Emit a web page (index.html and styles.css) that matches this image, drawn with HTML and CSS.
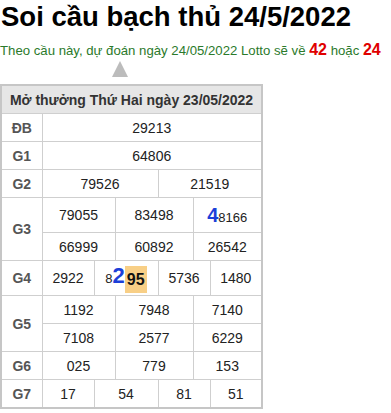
FILE: index.html
```html
<!DOCTYPE html>
<html lang="vi">
<head>
<meta charset="utf-8">
<title>Soi cầu bạch thủ 24/5/2022</title>
<link rel="stylesheet" href="styles.css">
</head>
<body>
<h1 class="title">Soi cầu bạch thủ 24/5/2022</h1>
<p class="predict">Theo cầu này, dự đoán ngày 24/05/2022 Lotto sẽ về <b class="hot">42</b> hoặc <b class="hot">24</b></p>
<div class="pointer"></div>
<table class="result">
  <colgroup>
    <col class="c-label"><col class="c1"><col class="c2"><col class="c3"><col class="c4"><col class="c5"><col class="c6">
  </colgroup>
  <thead>
    <tr><th colspan="7" class="head">Mở thưởng Thứ Hai ngày 23/05/2022</th></tr>
  </thead>
  <tbody>
    <tr><td class="lbl">ĐB</td><td colspan="6">29213</td></tr>
    <tr><td class="lbl">G1</td><td colspan="6">64806</td></tr>
    <tr><td class="lbl">G2</td><td colspan="3">79526</td><td colspan="3">21519</td></tr>
    <tr class="tall"><td class="lbl" rowspan="2">G3</td><td colspan="2">79055</td><td colspan="2">83498</td><td colspan="2"><b class="pick">4</b><span class="rest">8166</span></td></tr>
    <tr><td colspan="2">66999</td><td colspan="2">60892</td><td colspan="2">26542</td></tr>
    <tr class="tall"><td class="lbl">G4</td><td>2922</td><td colspan="2"><span class="rest">8</span><b class="pick pick-lg">2</b><b class="mark">95</b></td><td colspan="2">5736</td><td>1480</td></tr>
    <tr><td class="lbl" rowspan="2">G5</td><td colspan="2">1192</td><td colspan="2">7948</td><td colspan="2">7140</td></tr>
    <tr><td colspan="2">7108</td><td colspan="2">2577</td><td colspan="2">6229</td></tr>
    <tr><td class="lbl">G6</td><td colspan="2">025</td><td colspan="2">779</td><td colspan="2">153</td></tr>
    <tr><td class="lbl">G7</td><td>17</td><td colspan="2">54</td><td colspan="2">81</td><td>51</td></tr>
  </tbody>
</table>
</body>
</html>
```

FILE: styles.css
```css
html, body {
  margin: 0;
  padding: 0;
  background: #ffffff;
}

body {
  font-family: Arial, "Liberation Sans", sans-serif;
  color: #222;
}

.title {
  margin: 0;
  padding-left: 1px;
  font-size: 27.5px;
  line-height: 34px;
  font-weight: bold;
  color: #000;
}

.predict {
  margin: 7px 0 0 0;
  font-size: 13.2px;
  line-height: 18px;
  color: #2b7a2b;
  white-space: nowrap;
}

.hot {
  color: #e00000;
  font-size: 16px;
}

.pointer {
  width: 0;
  height: 0;
  margin: 1px 0 0 112px;
  border-left: 8px solid transparent;
  border-right: 8px solid transparent;
  border-bottom: 16px solid #bcbcbc;
}

.result {
  margin-top: 7px;
  border-collapse: collapse;
  table-layout: fixed;
  width: 262px;
  border: 2px solid #c6c6c6;
  font-size: 14px;
}

.c-label { width: 41px; }
.c1 { width: 52px; }
.c2 { width: 21px; }
.c3 { width: 43px; }
.c4 { width: 35px; }
.c5 { width: 17px; }
.c6 { width: 52px; }

.result th,
.result td {
  border: 1px solid #cfcfcf;
  text-align: center;
  padding: 0;
  height: 27px;
  white-space: nowrap;
}

.head {
  background: #e6e6e6;
  color: #333;
  font-weight: bold;
  font-size: 14px;
}

.lbl {
  font-weight: bold;
  color: #555;
}

.tall td {
  height: 34px;
}

.pick {
  color: #1c3fd8;
  font-size: 20px;
}

.pick-lg {
  font-size: 22px;
}

.rest {
  font-size: 13px;
}

.mark {
  display: inline-block;
  background: #f8cf86;
  color: #111;
  font-size: 16px;
  line-height: 27px;
  padding: 0 2px;
  vertical-align: middle;
}
```
